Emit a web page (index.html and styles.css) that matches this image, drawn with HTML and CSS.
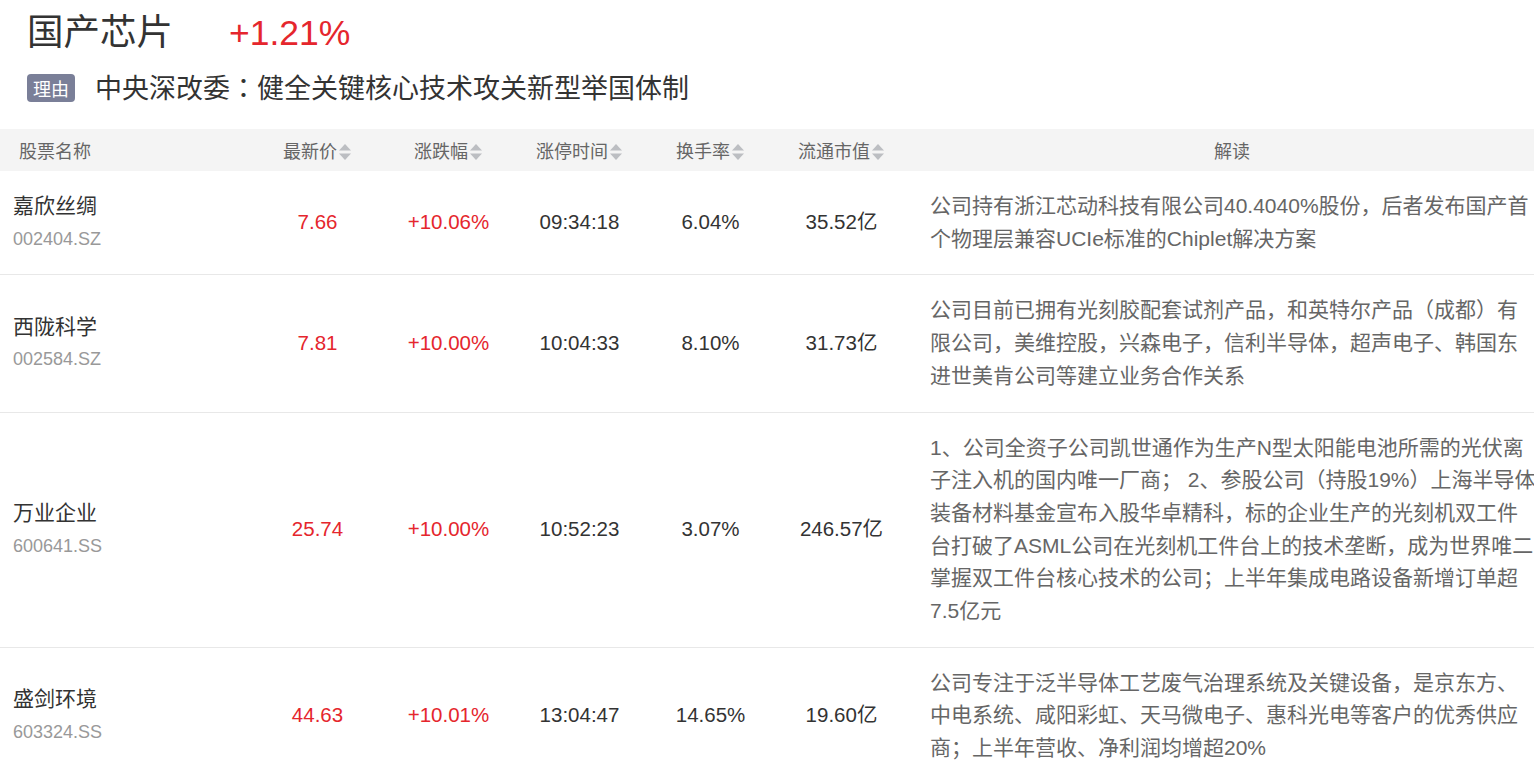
FILE: index.html
```html
<!DOCTYPE html>
<html lang="zh-CN">
<head>
<meta charset="utf-8">
<title>国产芯片</title>
<link rel="stylesheet" href="styles.css">
</head>
<body>
<div class="page">
  <header class="topic">
    <div class="topic-title">
      <h1 class="topic-name">国产芯片</h1>
      <span class="topic-change">+1.21%</span>
    </div>
    <div class="topic-reason">
      <span class="tag">理由</span>
      <span class="reason-text">中央深改委<span class="punct" lang="zh-Hant">：</span>健全关键核心技术攻关新型举国体制</span>
    </div>
  </header>

  <table class="stocks">
    <colgroup>
      <col class="c-name">
      <col class="c-num"><col class="c-num"><col class="c-num"><col class="c-num"><col class="c-num">
      <col class="c-desc">
    </colgroup>
    <thead>
      <tr>
        <th class="th-name">股票名称</th>
        <th>最新价<svg class="sort" viewBox="0 0 14 18" width="14" height="18"><polygon points="7,1 13,7.5 1,7.5"/><polygon points="1,10.5 13,10.5 7,17"/></svg></th>
        <th>涨跌幅<svg class="sort" viewBox="0 0 14 18" width="14" height="18"><polygon points="7,1 13,7.5 1,7.5"/><polygon points="1,10.5 13,10.5 7,17"/></svg></th>
        <th>涨停时间<svg class="sort" viewBox="0 0 14 18" width="14" height="18"><polygon points="7,1 13,7.5 1,7.5"/><polygon points="1,10.5 13,10.5 7,17"/></svg></th>
        <th>换手率<svg class="sort" viewBox="0 0 14 18" width="14" height="18"><polygon points="7,1 13,7.5 1,7.5"/><polygon points="1,10.5 13,10.5 7,17"/></svg></th>
        <th>流通市值<svg class="sort" viewBox="0 0 14 18" width="14" height="18"><polygon points="7,1 13,7.5 1,7.5"/><polygon points="1,10.5 13,10.5 7,17"/></svg></th>
        <th class="th-desc">解读</th>
      </tr>
    </thead>
    <tbody>
      <tr>
        <td class="name"><div class="stock-name">嘉欣丝绸</div><div class="stock-code">002404.SZ</div></td>
        <td class="num up">7.66</td>
        <td class="num up">+10.06%</td>
        <td class="num">09:34:18</td>
        <td class="num">6.04%</td>
        <td class="num">35.52亿</td>
        <td class="desc">公司持有浙江芯动科技有限公司40.4040%股份，后者发布国产首个物理层兼容UCIe标准的Chiplet解决方案</td>
      </tr>
      <tr>
        <td class="name"><div class="stock-name">西陇科学</div><div class="stock-code">002584.SZ</div></td>
        <td class="num up">7.81</td>
        <td class="num up">+10.00%</td>
        <td class="num">10:04:33</td>
        <td class="num">8.10%</td>
        <td class="num">31.73亿</td>
        <td class="desc">公司目前已拥有光刻胶配套试剂产品，和英特尔产品（成都）有限公司，美维控股，兴森电子，信利半导体，超声电子、韩国东进世美肯公司等建立业务合作关系</td>
      </tr>
      <tr>
        <td class="name"><div class="stock-name">万业企业</div><div class="stock-code">600641.SS</div></td>
        <td class="num up">25.74</td>
        <td class="num up">+10.00%</td>
        <td class="num">10:52:23</td>
        <td class="num">3.07%</td>
        <td class="num">246.57亿</td>
        <td class="desc">1、公司全资子公司凯世通作为生产N型太阳能电池所需的光伏离子注入机的国内唯一厂商； 2、参股公司（持股19%）上海半导体装备材料基金宣布入股华卓精科，标的企业生产的光刻机双工件台打破了ASML公司在光刻机工件台上的技术垄断，成为世界唯二掌握双工件台核心技术的公司；上半年集成电路设备新增订单超7.5亿元</td>
      </tr>
      <tr>
        <td class="name"><div class="stock-name">盛剑环境</div><div class="stock-code">603324.SS</div></td>
        <td class="num up">44.63</td>
        <td class="num up">+10.01%</td>
        <td class="num">13:04:47</td>
        <td class="num">14.65%</td>
        <td class="num">19.60亿</td>
        <td class="desc">公司专注于泛半导体工艺废气治理系统及关键设备，是京东方、中电系统、咸阳彩虹、天马微电子、惠科光电等客户的优秀供应商；上半年营收、净利润均增超20%</td>
      </tr>
    </tbody>
  </table>
</div>
</body>
</html>
```

FILE: styles.css
```css
html, body {
  margin: 0;
  padding: 0;
  background: #ffffff;
  overflow: hidden;
}

body {
  font-family: "Liberation Sans", "Noto Sans CJK SC", sans-serif;
  color: #333333;
}

.page {
  width: 1557px;
}

.topic {
  padding: 11px 0 0 27px;
}

.topic-title {
  display: flex;
  align-items: center;
  gap: 56px;
  height: 44px;
}

.topic-name {
  margin: 0;
  font-size: 36.5px;
  font-weight: normal;
  line-height: 44px;
  color: #333333;
}

.topic-change {
  font-size: 35.5px;
  line-height: 44px;
  color: #e5262d;
}

.topic-reason {
  display: flex;
  align-items: center;
  margin-top: 16px;
  height: 34px;
}

.tag {
  display: inline-flex;
  align-items: center;
  justify-content: center;
  width: 48px;
  height: 28px;
  border-radius: 4px;
  background: #7a7f98;
  color: #ffffff;
  font-size: 18px;
  margin-right: 20px;
}

.reason-text {
  font-size: 27px;
  line-height: 34px;
  color: #333333;
}

.punct {
  font-family: "Noto Sans CJK TC", sans-serif;
}

.stocks {
  margin-top: 24px;
  width: 1557px;
  table-layout: fixed;
  border-collapse: collapse;
  border-spacing: 0;
}

.c-name { width: 252px; }
.c-num { width: 131px; }
.c-desc { width: 650px; }

.stocks th {
  height: 42px;
  padding: 0;
  background: #f4f4f4;
  font-size: 18px;
  font-weight: normal;
  color: #666666;
  text-align: center;
  vertical-align: middle;
  white-space: nowrap;
}

.stocks th.th-name {
  text-align: left;
  padding-left: 19px;
}

.sort {
  display: inline-block;
  vertical-align: -3px;
  margin-left: 1px;
  fill: #bcbec2;
}

.stocks td {
  border-bottom: 1px solid #e8e8e8;
  vertical-align: middle;
  padding: 19px 0;
  line-height: 32.7px;
}

.stocks td.name {
  padding-left: 13px;
}

.stock-name {
  font-size: 21px;
  color: #333333;
}

.stock-code {
  font-size: 18px;
  color: #999999;
}

.stocks td.num {
  text-align: center;
  font-size: 20.5px;
  color: #333333;
}

.stocks td.num.up {
  color: #e5262d;
}

.stocks td.desc {
  padding-left: 23px;
  padding-right: 20.5px;
  font-size: 21px;
  color: #666666;
}
```
